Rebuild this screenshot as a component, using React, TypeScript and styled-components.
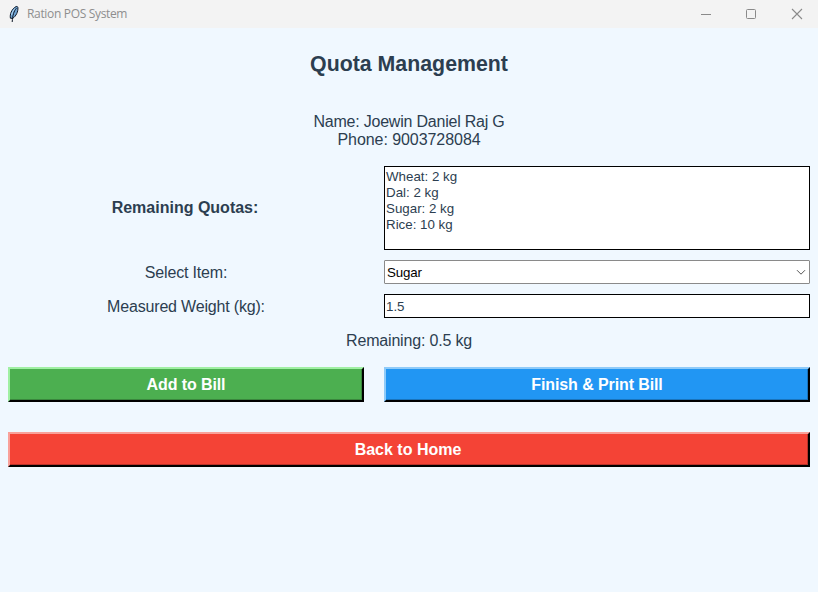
import React from 'react';
import styled, { createGlobalStyle } from 'styled-components';

const GlobalStyle = createGlobalStyle`
  * { box-sizing: border-box; }
  body { margin: 0; background: #f0f8ff; font-family: 'Liberation Sans', Arial, sans-serif; color: #2c3e50; }
`;

const Window = styled.div`
  width: 818px;
  height: 592px;
  display: flex;
  flex-direction: column;
  background: #f0f8ff;
  overflow: hidden;
`;

const TitleBar = styled.header`
  height: 28px;
  flex: none;
  display: flex;
  align-items: center;
  background: #f3f3f3;
  padding-left: 8px;
`;

const WindowTitle = styled.span`
  margin-left: 7px;
  font: 12px/16px 'Open Sans', 'Noto Sans', sans-serif;
  letter-spacing: -0.33px;
  color: #8e8e8e;
  flex: 1;
`;

const Controls = styled.div`
  display: flex;
  gap: 34px;
  padding-right: 15px;
  padding-bottom: 1px;
  svg { display: block; }
`;

const Content = styled.main`
  padding: 0 8px;
`;

const Heading = styled.h1`
  margin: 24px 0 0;
  text-align: center;
  font-size: 21.33px;
  line-height: 24px;
  height: 24px;
`;

const Customer = styled.div`
  margin-top: 37px;
  text-align: center;
  font-size: 16px;
  line-height: 18px;
`;

const CustomerLine = styled.div<{ $spacing: number }>`
  letter-spacing: ${(p) => p.$spacing}px;
`;

const Form = styled.div`
  margin-top: 17px;
  display: grid;
  grid-template-columns: 356px 426px;
  column-gap: 20px;
  row-gap: 10px;
  align-items: center;
`;

const Label = styled.label<{ $bold?: boolean }>`
  text-align: center;
  font-size: 16px;
  line-height: 18px;
  font-weight: ${(p) => (p.$bold ? 700 : 400)};
  letter-spacing: ${(p) => (p.$bold ? 0 : -0.18)}px;
  padding: ${(p) => (p.$bold ? '0 2px 0 0' : '2px 0 0')};
`;

const QuotaList = styled.div`
  height: 84px;
  border: 1px solid #000;
  background: #fff;
  padding: 2px 1px;
  font-size: 13.33px;
  line-height: 16px;
`;

const Select = styled.div`
  height: 24px;
  border: 1px solid #8a8a8a;
  border-radius: 1px;
  background: #fff;
  color: #000;
  display: flex;
  align-items: center;
  justify-content: space-between;
  padding: 0 3px 0 2px;
  font-size: 13.33px;
  letter-spacing: -0.15px;
`;

const Entry = styled.div`
  height: 24px;
  border: 1px solid #000;
  background: #fff;
  padding: 0 1px;
  font-size: 13.33px;
  line-height: 23px;
`;

const Remaining = styled.div`
  margin-top: 14px;
  text-align: center;
  font-size: 16px;
  line-height: 18px;
  letter-spacing: -0.18px;
`;

const Actions = styled.div`
  margin-top: 17px;
  display: grid;
  grid-template-columns: 356px 426px;
  column-gap: 20px;
  row-gap: 30px;
`;

const Button = styled.button<{ $face: string; $light: string; $shade: string; $wide?: boolean }>`
  height: 35px;
  margin: 0;
  padding: 0 ${(p) => (p.$wide ? 2 : 0)}px 0 0;
  grid-column: ${(p) => (p.$wide ? '1 / -1' : 'auto')};
  border: 2px solid #000;
  border-top-color: ${(p) => p.$light};
  border-left-color: ${(p) => p.$light};
  background: ${(p) => p.$face};
  box-shadow: inset -1px -1px 0 ${(p) => p.$shade};
  color: #fff;
  font: bold 16px/31px 'Liberation Sans', Arial, sans-serif;
  letter-spacing: ${(p) => (p.$wide ? 0 : -0.1)}px;
`;

const Feather = () => (
  <svg width="12" height="18" viewBox="0 0 12 18">
    <path d="M2.4 13.2C1.7 9.4 3.4 4.3 8 1.6c1.1-.4 1.8 0 1.9 1 .3 4-1.7 8.4-5.2 10.8z" fill="#6fa3d2" stroke="#0d1726" strokeWidth="1" />
    <path d="M8.4 3C5.9 6.4 4.6 10 4.2 17" fill="none" stroke="#0d1726" strokeWidth="1" />
    <path d="M7.2 3.4C5.3 5 4 7.4 3.6 10" fill="none" stroke="#b5dcf8" strokeWidth="1" />
  </svg>
);

const quotas = ['Wheat: 2 kg', 'Dal: 2 kg', 'Sugar: 2 kg', 'Rice: 10 kg'];

export default function App() {
  return (
    <Window>
      <GlobalStyle />
      <TitleBar>
        <Feather />
        <WindowTitle>Ration POS System</WindowTitle>
        <Controls>
          <svg width="12" height="12" viewBox="0 0 12 12"><path d="M2 6.5h10" stroke="#8a8a8a" /></svg>
          <svg width="12" height="12" viewBox="0 0 12 12"><rect x="1.5" y="1.5" width="9" height="9" rx="1" fill="none" stroke="#8a8a8a" /></svg>
          <svg width="12" height="12" viewBox="0 0 12 12"><path d="M1 1l10 10M11 1L1 11" stroke="#8a8a8a" strokeWidth="1.1" /></svg>
        </Controls>
      </TitleBar>
      <Content>
        <Heading>Quota Management</Heading>
        <Customer>
          <CustomerLine $spacing={-0.22}>Name: Joewin Daniel Raj G</CustomerLine>
          <CustomerLine $spacing={-0.06}>Phone: 9003728084</CustomerLine>
        </Customer>
        <Form>
          <Label $bold>Remaining Quotas:</Label>
          <QuotaList>
            {quotas.map((q) => <div key={q}>{q}</div>)}
          </QuotaList>
          <Label>Select Item:</Label>
          <Select>
            <span>Sugar</span>
            <svg width="10" height="10" viewBox="0 0 10 10"><path d="M1 3.2l4 4 4-4" fill="none" stroke="#555" /></svg>
          </Select>
          <Label>Measured Weight (kg):</Label>
          <Entry>1.5</Entry>
        </Form>
        <Remaining>Remaining: 0.5 kg</Remaining>
        <Actions>
          <Button $face="#4caf50" $light="#a0f0a3" $shade="#3a873d">Add to Bill</Button>
          <Button $face="#2196f3" $light="#8fcbf9" $shade="#1974bc">Finish &amp; Print Bill</Button>
          <Button $wide $face="#f44336" $light="#f9a19a" $shade="#b8332a">Back to Home</Button>
        </Actions>
      </Content>
    </Window>
  );
}
